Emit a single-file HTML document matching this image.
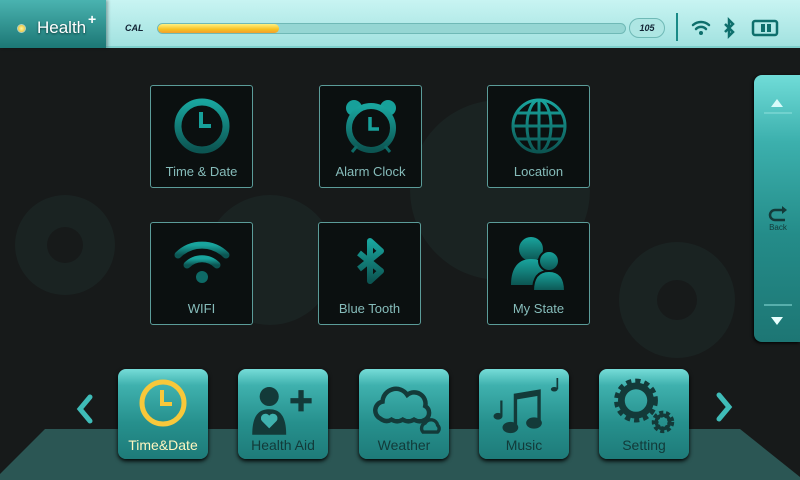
<!DOCTYPE html>
<html><head><meta charset="utf-8"><style>
*{margin:0;padding:0;box-sizing:border-box}
body{width:800px;height:480px;overflow:hidden;background:#171a1a;font-family:"Liberation Sans",sans-serif;position:relative}
.top{position:absolute;left:0;top:0;width:800px;height:48px;background:linear-gradient(#c8f4f2,#a2e2e0);border-bottom:2px solid #7fd0cd}
.tab{position:absolute;left:0;top:0;width:106px;height:48px;background:linear-gradient(#4ab3b0,#1c7775);box-shadow:2px 0 3px rgba(0,0,0,.3)}
.tab .dot{position:absolute;left:17px;top:24px;width:9px;height:9px;border-radius:50%;background:radial-gradient(#fff6a0,#e6b820);border:1px solid #b0d0c0}
.tab .t{position:absolute;left:37px;top:18px;color:#fff;font-size:17px;text-shadow:0 1px 2px #0a3a38}
.tab .p{position:absolute;left:88px;top:11px;color:#fff;font-size:14px;font-weight:bold}
.cal{position:absolute;left:125px;top:23px;font-size:9px;font-weight:bold;font-style:italic;color:#123}
.bar{position:absolute;left:157px;top:23px;width:469px;height:11px;border-radius:6px;background:#95d6d3;border:1px solid #6fb9b6}
.fill{position:absolute;left:0;top:0;width:121px;height:9px;border-radius:5px;background:linear-gradient(#fff080,#f8c020 60%,#f0a030)}
.num{position:absolute;left:629px;top:18px;width:36px;height:20px;border-radius:10px;border:1px solid #6fb9b6;background:#aee6e3;font-size:9px;font-weight:bold;font-style:italic;text-align:center;line-height:18px;color:#123}
.sep{position:absolute;left:676px;top:13px;width:2px;height:28px;background:#1a8a87}
.tile{position:absolute;width:103px;height:103px;background:#0b1010;border:1px solid #5b9c99;border-radius:3px}
.tile span{position:absolute;left:0;right:0;bottom:8px;text-align:center;color:#86bcba;font-size:13px}
.tile svg{position:absolute;left:21px;top:10px}
.floor{position:absolute;left:0;top:429px;width:800px;height:51px;background:#2b5654;clip-path:polygon(45px 0,740px 0,800px 48px,800px 51px,0 51px,0 45px)}
.btn{position:absolute;top:369px;width:90px;height:90px;border-radius:8px;background:linear-gradient(#76dcd8,#3fb1ae 18%,#26908d 60%,#1e7b79);box-shadow:0 2px 4px #000}
.btn span{position:absolute;left:0;right:0;bottom:6px;text-align:center;font-size:14px;color:#123a39}
.btn svg{position:absolute;left:10px;top:4px}
.side{position:absolute;left:754px;top:75px;width:46px;height:267px;border-radius:8px 0 0 8px;background:linear-gradient(#70dcd8,#3cb0ad 25%,#248c89 60%,#1d7674);box-shadow:-1px 1px 3px #000}
</style></head><body>
<svg style="position:absolute;left:0;top:0" width="800" height="480">
<g fill="#1a2322"><circle cx="65" cy="245" r="50"/><circle cx="677" cy="300" r="58"/><circle cx="500" cy="190" r="90"/><circle cx="270" cy="260" r="65"/></g>
<g fill="#171a1a"><circle cx="65" cy="245" r="18"/><circle cx="677" cy="300" r="20"/></g>
</svg>
<div class="top"><div class="tab"><div class="dot"></div><div class="t">Health</div><div class="p">+</div></div>
<div class="cal">CAL</div><div class="bar"><div class="fill"></div></div><div class="num">105</div><div class="sep"></div>
<svg style="position:absolute;left:690px;top:16px" width="90" height="24">
<g fill="none" stroke="#0e6f6c" stroke-width="2.5" stroke-linecap="round"><path d="M3 9a12 12 0 0 1 16 0"/><path d="M6 13a7 7 0 0 1 10 0"/></g><circle cx="11" cy="17" r="2" fill="#0e6f6c"/>
<path d="M35 8l8 8-4 4V4l4 4-8 8" fill="none" stroke="#0e6f6c" stroke-width="2.5"/>
<rect x="63" y="5" width="24" height="14" rx="2" fill="none" stroke="#0e6f6c" stroke-width="2.5"/><rect x="71" y="8" width="4" height="8" fill="#0e6f6c"/><rect x="77" y="8" width="4" height="8" fill="#0e6f6c"/>
</svg></div>
<svg width="0" height="0"><defs><linearGradient id="g" x1="0" y1="0" x2="0" y2="1"><stop offset="0" stop-color="#19a59e"/><stop offset="1" stop-color="#0c5552"/></linearGradient></defs></svg>
<div class="tile" style="left:150px;top:85px"><svg width="60" height="60"><circle cx="30" cy="30" r="24" fill="none" stroke="url(#g)" stroke-width="7"/><path d="M29 16v14h10" fill="none" stroke="#17a09a" stroke-width="4"/></svg><span>Time &amp; Date</span></div>
<div class="tile" style="left:319px;top:85px"><svg width="60" height="60"><circle cx="13" cy="12" r="8" fill="#17a09a"/><circle cx="47" cy="12" r="8" fill="#17a09a"/><circle cx="30" cy="32" r="22" fill="#0b1010" stroke="url(#g)" stroke-width="6"/><path d="M29 21v12h9" fill="none" stroke="#17a09a" stroke-width="3.5"/><path d="M16 50l-5 6M44 50l5 6" stroke="#0e6a66" stroke-width="3"/></svg><span>Alarm Clock</span></div>
<div class="tile" style="left:487px;top:85px"><svg width="60" height="60" fill="none" stroke="url(#g)" stroke-width="3"><circle cx="30" cy="30" r="26"/><ellipse cx="30" cy="30" rx="12" ry="26"/><path d="M30 4v52M4 30h52M8 17h44M8 43h44"/></svg><span>Location</span></div>
<div class="tile" style="left:150px;top:222px"><svg width="60" height="60"><g fill="none" stroke="url(#g)" stroke-width="7" stroke-linecap="round"><path d="M6 22a34 34 0 0 1 48 0"/><path d="M15 32a21 21 0 0 1 30 0"/></g><circle cx="30" cy="44" r="6" fill="#0e6a66"/></svg><span>WIFI</span></div>
<div class="tile" style="left:318px;top:222px"><svg width="60" height="60"><path d="M19 20l22 18-11 10V8l11 10-22 18" fill="none" stroke="url(#g)" stroke-width="6" stroke-linejoin="round"/></svg><span>Blue Tooth</span></div>
<div class="tile" style="left:487px;top:222px"><svg width="60" height="60" fill="url(#g)"><circle cx="22" cy="16" r="12"/><path d="M2 52c0-18 8-26 20-26s18 6 20 14v12z"/><circle cx="40" cy="28" r="10" stroke="#0b1010" stroke-width="2"/><path d="M24 58c0-14 6-20 16-20s16 6 16 20z" stroke="#0b1010" stroke-width="2"/></svg><span>My State</span></div>
<div class="floor"></div>
<svg style="position:absolute;left:75px;top:393px" width="20" height="32"><path d="M15 4L5 16l10 12" fill="none" stroke="#3fbcb8" stroke-width="5" stroke-linecap="round"/></svg>
<svg style="position:absolute;left:714px;top:391px" width="20" height="32"><path d="M5 4l10 12-10 12" fill="none" stroke="#3fbcb8" stroke-width="5" stroke-linecap="round"/></svg>
<div class="btn" style="left:118px"><svg width="70" height="64" viewBox="-5 -4 70 64"><circle cx="30" cy="26" r="21" fill="none" stroke="#f8c83a" stroke-width="5"/><path d="M29 13v14h10" fill="none" stroke="#f8c83a" stroke-width="4"/></svg><span style="color:#fff6c0">Time&amp;Date</span></div>
<div class="btn" style="left:238px"><svg width="70" height="64" viewBox="-4 -6 66 60" fill="#133a39"><circle cx="16" cy="16" r="9"/><path d="M0 52c0-18 6-24 16-24s16 6 16 24z"/><path d="M16 46l-7-7a4 4 0 0 1 7-5a4 4 0 0 1 7 5z" fill="#3fb1ae"/><path d="M36 20h20M46 10v20" stroke="#133a39" stroke-width="5"/></svg><span>Health Aid</span></div>
<div class="btn" style="left:359px"><svg width="72" height="64" viewBox="-2 -2 64 56" fill="none" stroke="#133a39" stroke-width="4"><path d="M8 38a8 8 0 0 1 2-15a12 12 0 0 1 22-6a10 10 0 0 1 16 10a7 7 0 0 1 0 12q-5 3-10 0q-5 3-10 0q-5 3-10 0q-5 3-10-1z"/><path d="M46 50a5 5 0 0 1 2-8a6 6 0 0 1 11 2a4 4 0 0 1 0 6z" stroke-width="3"/></svg><span>Weather</span></div>
<div class="btn" style="left:479px"><svg width="72" height="64" viewBox="-2 -2 64 56" fill="#133a39"><path d="M20 16l24-4v30h-3V18l-18 3v25h-3z"/><ellipse cx="17" cy="46" rx="7" ry="5"/><ellipse cx="38" cy="42" rx="7" ry="5"/><path d="M8 22h2v14h-2z"/><ellipse cx="6" cy="36" rx="4" ry="3"/><path d="M58 2h1.5v10h-1.5z"/><ellipse cx="56" cy="12" rx="3" ry="2"/></svg><span>Music</span></div>
<div class="btn" style="left:599px"><svg width="72" height="64" viewBox="-2 -2 64 56"><circle cx="22" cy="22" r="15" fill="none" stroke="#133a39" stroke-width="9" stroke-dasharray="4 3"/><circle cx="22" cy="22" r="13" fill="none" stroke="#133a39" stroke-width="6"/><circle cx="46" cy="41" r="7" fill="none" stroke="#133a39" stroke-width="6" stroke-dasharray="3 2"/><circle cx="46" cy="41" r="6" fill="none" stroke="#133a39" stroke-width="3"/></svg><span>Setting</span></div>
<div class="side"><svg width="46" height="267"><path d="M23 24l-6 8h12z" fill="#d8fbfa"/><path d="M10 38h28M10 230h28" stroke="#8fe0dc" stroke-width="1"/><path d="M23 250l-6-8h12z" fill="#e8fffe"/><path d="M31 135h-10a5 5 0 0 0 0 10h10" fill="none" stroke="#133a39" stroke-width="2.5"/><path d="M28 131l5 4-5 4z" fill="#133a39"/><text x="24" y="155" font-size="8" text-anchor="middle" fill="#133a39" font-family="Liberation Sans">Back</text></svg></div>
</body></html>
